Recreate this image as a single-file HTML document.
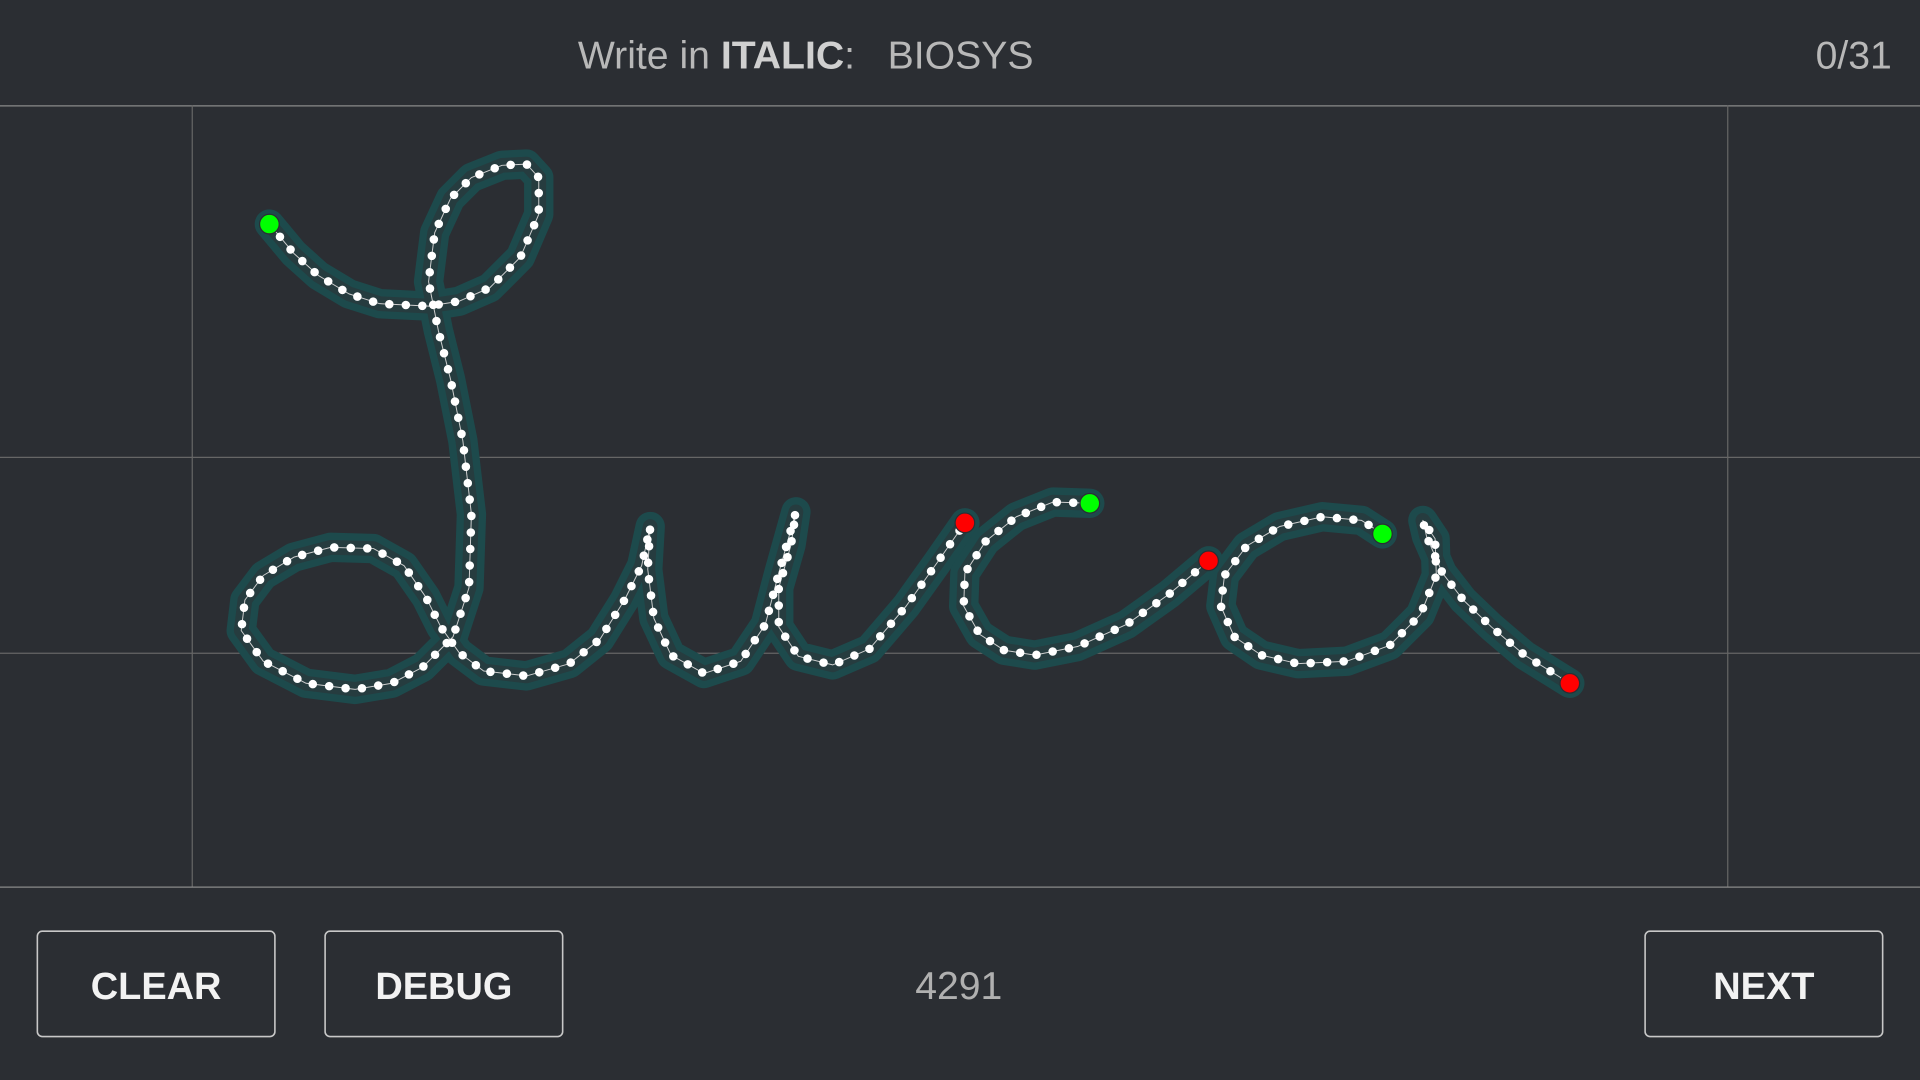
<!DOCTYPE html>
<html><head><meta charset="utf-8"><style>
html,body{margin:0;padding:0;background:#2b2e33;width:1920px;height:1080px;overflow:hidden}
svg{display:block}
text{font-family:"Liberation Sans",sans-serif}
</style></head><body>
<svg width="1920" height="1080" viewBox="0 0 1568 882" xmlns="http://www.w3.org/2000/svg">
<rect width="1568" height="882" fill="#2b2e33"/>
<text x="658" y="56" text-anchor="middle" font-size="32" fill="#b8b8b8" xml:space="preserve">Write in <tspan font-weight="bold" fill="#d0d0d0">ITALIC</tspan>:   BIOSYS</text>
<text x="1545" y="56" text-anchor="end" font-size="32" fill="#b8b8b8">0/31</text>
<g stroke="#8a8a8a" stroke-width="1">
<line x1="0" y1="86.5" x2="1568" y2="86.5"/>
<line x1="0" y1="724.5" x2="1568" y2="724.5"/>
<line x1="157" y1="86" x2="157" y2="724" stroke="#666"/>
<line x1="1411" y1="86" x2="1411" y2="724" stroke="#666"/>
<line x1="0" y1="373.5" x2="1568" y2="373.5" stroke="#666"/>
<line x1="0" y1="533.5" x2="1568" y2="533.5" stroke="#666"/>
</g>
<defs>
<path id="s1" d="M220,183 L240,207 260,225 285,240 310,248 350,250 375,246 400,235 425,210 440,175 440,145 430,134 410,135 385,145 368,162 355,190 350,230 358,270 368,310 378,360 385,420 383,480 370,520 345,545 320,558 290,563 250,558 215,540 197,515 200,490 215,470 240,455 270,447 305,448 330,462 348,488 360,512 375,533 395,548 430,552 465,542 490,522 510,490 524,462 531,430 529,465 534,505 548,535 575,550 605,540 625,510 636,468 650,418 646,445 636,480 636,512 652,536 680,543 710,530 740,495 765,460 788,427"/>
<path id="s2" d="M890,411 L860,410 830,422 805,442 788,468 787,495 800,518 820,531 845,535 880,528 920,510 955,485 987,458"/>
<path id="s3" d="M1129,436 L1112,425 1080,422 1045,430 1018,446 1000,470 997,495 1008,520 1030,535 1060,542 1100,540 1135,527 1160,502 1173,470 1172,440 1162,425 1165,438 1178,468 1195,490 1218,512 1245,535 1282,558"/>
</defs>
<g fill="none" stroke-linejoin="round" stroke-linecap="round">
<g stroke="#1d4a4c" stroke-width="24"><use href="#s1"/><use href="#s2"/><use href="#s3"/></g>
<g stroke="#263c3f" stroke-width="12"><use href="#s1"/><use href="#s2"/><use href="#s3"/></g>
<g stroke="#cfcfcf" stroke-width="0.8"><use href="#s1"/><use href="#s2"/><use href="#s3"/></g>
<g stroke="#ffffff" stroke-width="7" stroke-dasharray="0 13.5"><use href="#s1"/><use href="#s2"/><use href="#s3"/></g>
</g>
<g stroke="#2b2e33" stroke-width="1">
<circle cx="220" cy="183" r="8" fill="#0f0"/>
<circle cx="890" cy="411" r="8" fill="#0f0"/>
<circle cx="1129" cy="436" r="8" fill="#0f0"/>
<circle cx="788" cy="427" r="8" fill="#f00"/>
<circle cx="987" cy="458" r="8" fill="#f00"/>
<circle cx="1282" cy="558" r="8" fill="#f00"/>
</g>
<g fill="none" stroke="#c8c8c8" stroke-width="1.3">
<rect x="30.5" y="760.5" width="194" height="86" rx="4"/>
<rect x="265.5" y="760.5" width="194" height="86" rx="4"/>
<rect x="1343.5" y="760.5" width="194" height="86" rx="4"/>
</g>
<g font-size="31" font-weight="bold" fill="#f2f2f2" text-anchor="middle">
<text x="127.5" y="816">CLEAR</text>
<text x="362.5" y="816">DEBUG</text>
<text x="1440.5" y="816">NEXT</text>
</g>
<text x="783" y="816" text-anchor="middle" font-size="32" fill="#b0b0b0">4291</text>
</svg>
</body></html>
